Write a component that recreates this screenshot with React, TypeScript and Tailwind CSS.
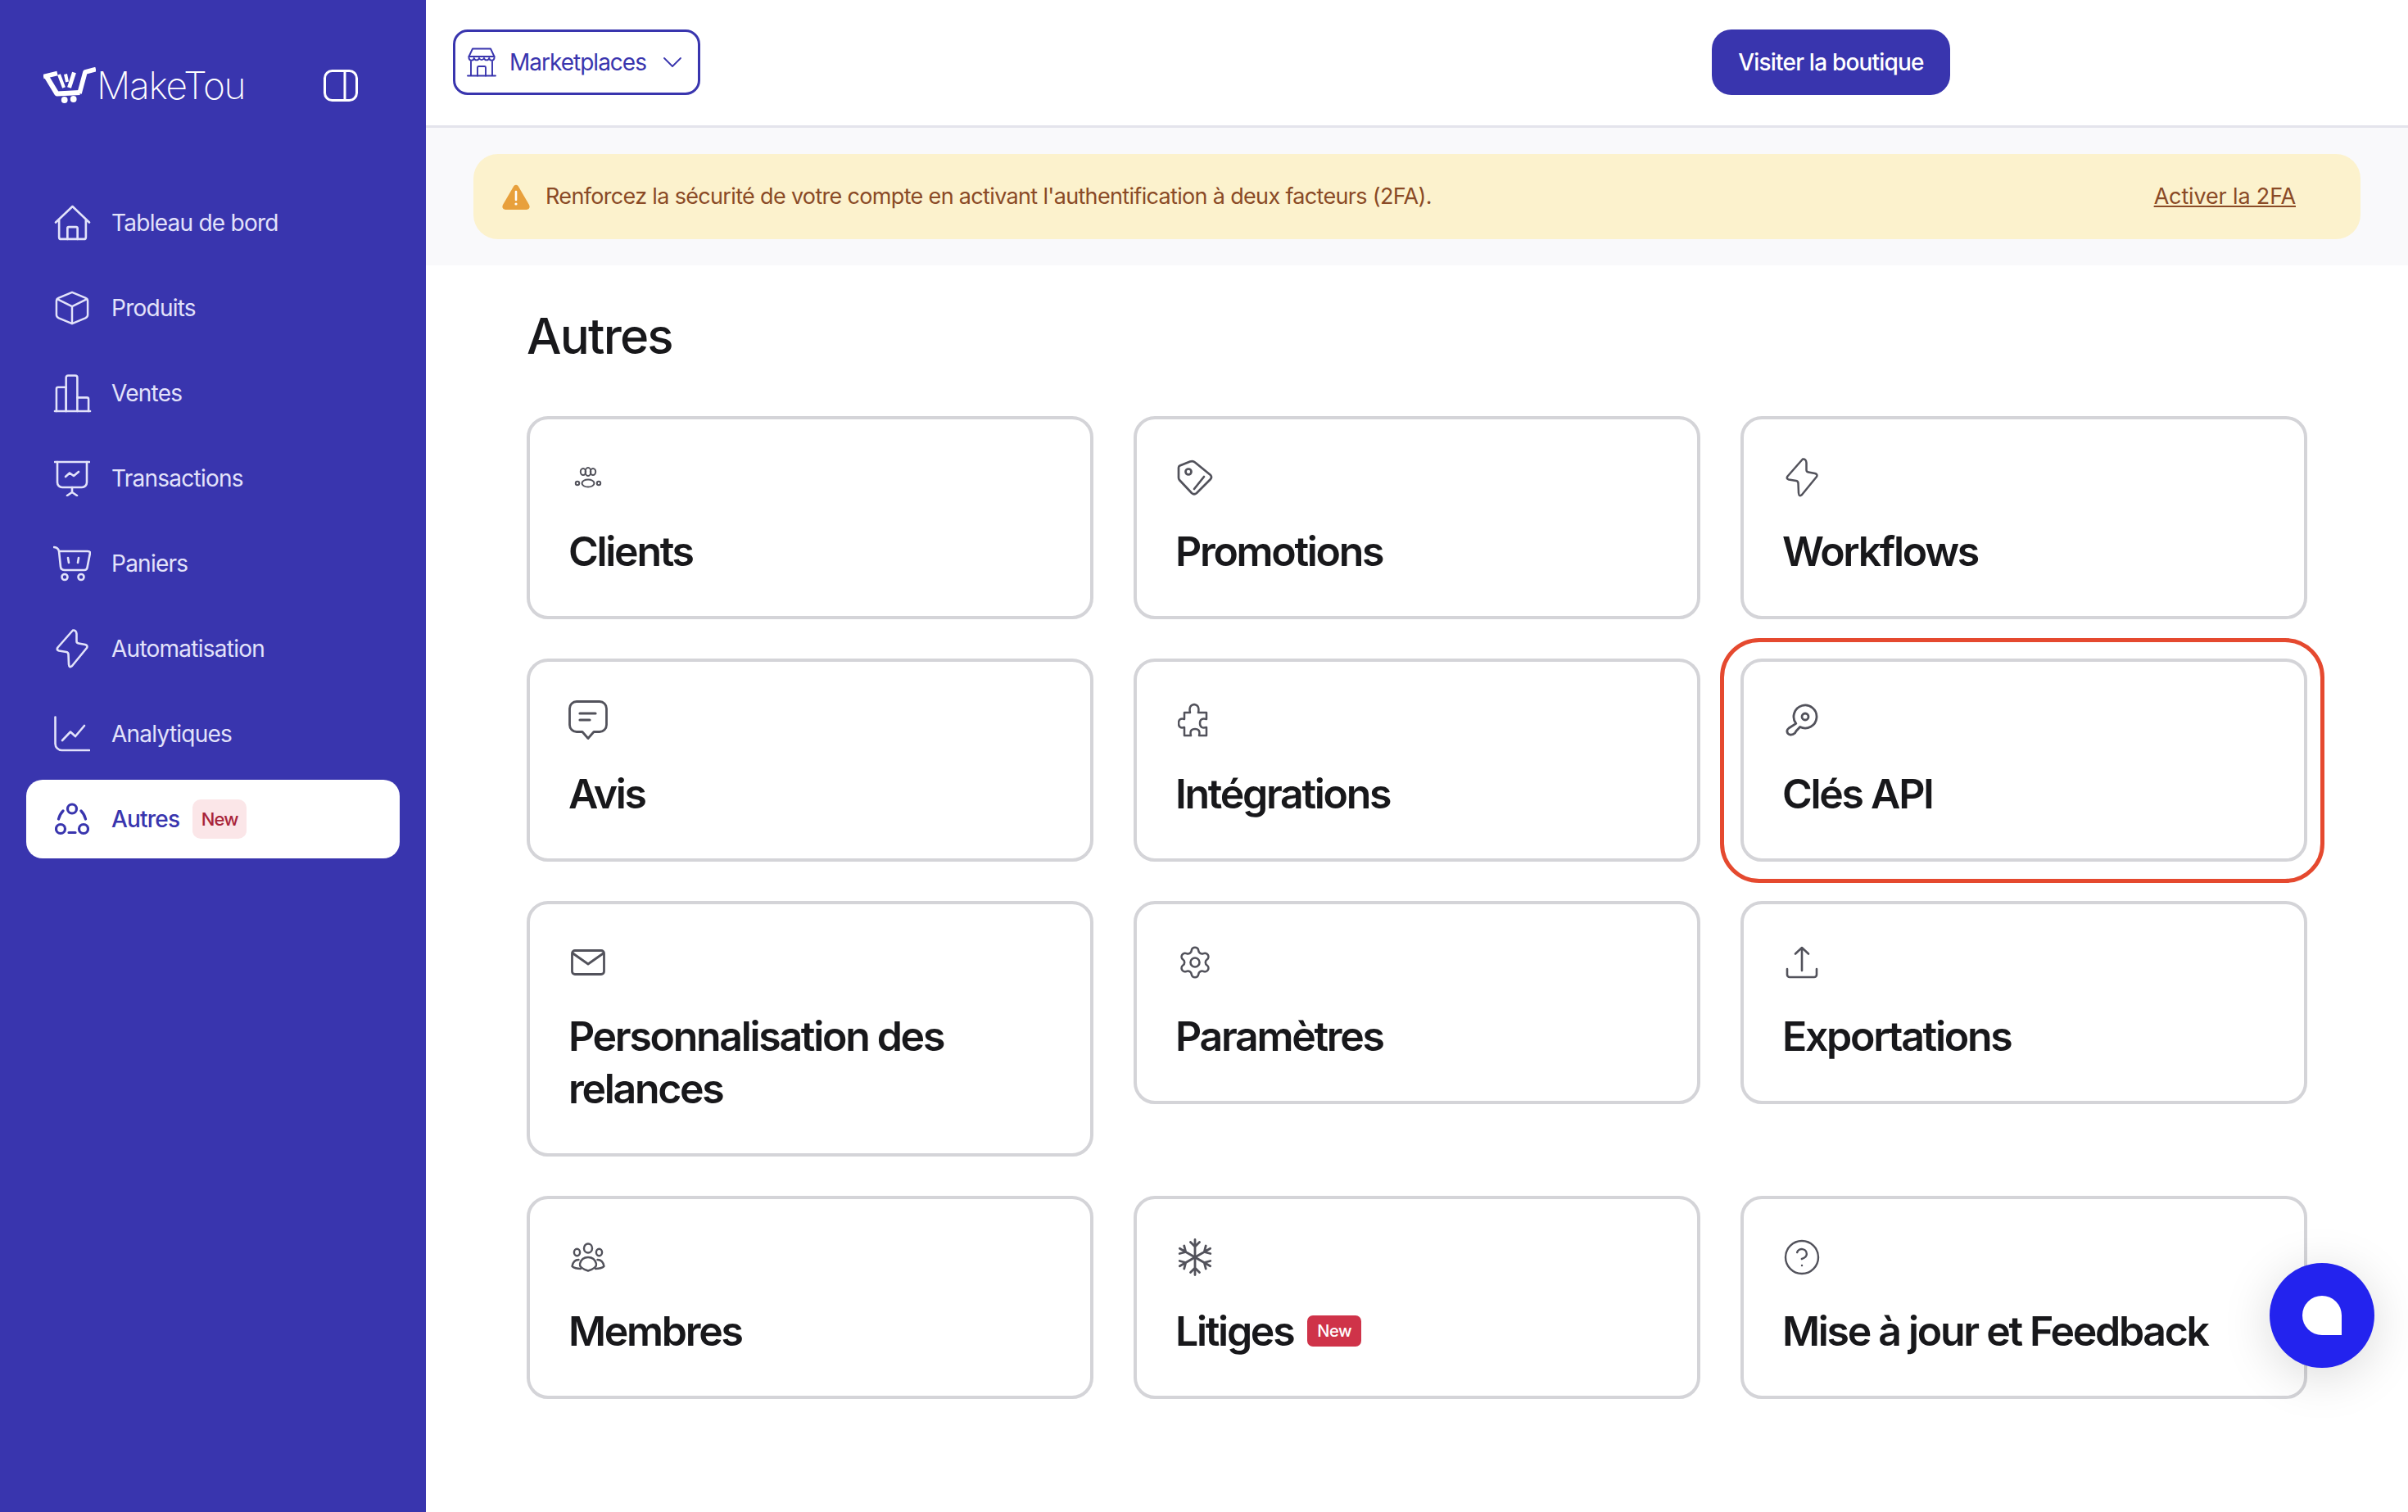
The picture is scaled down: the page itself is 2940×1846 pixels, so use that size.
import { ChevronDown, CircleHelp, Settings } from "lucide-react"
import type { ReactNode } from "react"

type IconProps = { className?: string }

function Svg({ className, box, sw = 2, children }: IconProps & { box: string; sw?: number; children: ReactNode }) {
  return (
    <svg viewBox={box} className={`shrink-0 ${className}`} fill="none" stroke="currentColor" strokeWidth={sw} strokeLinecap="round" strokeLinejoin="round">
      {children}
    </svg>
  )
}

function LogoCart({ className }: IconProps) {
  return (
    <svg viewBox="0 0 64 45" className={className} fill="none" stroke="white" strokeLinejoin="round" strokeLinecap="butt">
      <path d="M0 11.5 L17 7.5" strokeWidth="5.5" />
      <path d="M3.5 11 L16.5 32.5 L44.5 31" strokeWidth="6.2" />
      <path d="M44 32 L51 6 L64 2.5" strokeWidth="5.6" />
      <path d="M19 9 L25 25 M27 8.5 L29 18" strokeWidth="4" />
      <path d="M37.5 6.5 L31.5 25" strokeWidth="5" />
      <circle cx="25.7" cy="40" r="3.9" fill="white" stroke="none" />
      <circle cx="36.7" cy="39" r="3.9" fill="white" stroke="none" />
    </svg>
  )
}

function PanelIcon({ className }: IconProps) {
  return (
    <Svg className={className} box="0 0 42 39" sw={3}>
      <rect x="1.5" y="1.5" width="39" height="36" rx="9" />
      <path d="M26 1.5 V37.5" />
    </Svg>
  )
}

function HomeIcon({ className }: IconProps) {
  return (
    <Svg className={className} box="0 0 44 44" sw={2.6}>
      <path d="M2 21 L22 2 L42 21 M6 18 V38.5 A2.5 2.5 0 0 0 8.5 41 H35.5 A2.5 2.5 0 0 0 38 38.5 V18" />
      <path d="M16 41 V28 A1.5 1.5 0 0 1 17.5 26.5 H26.5 A1.5 1.5 0 0 1 28 28 V41" />
    </Svg>
  )
}

function BoxIcon({ className }: IconProps) {
  return (
    <Svg className={className} box="0 0 44 44" sw={2.6}>
      <path d="M22 2 L39 9 Q42 10.5 42 13 V31 Q42 33.5 39 35 L22 42 L5 35 Q2 33.5 2 31 V13 Q2 10.5 5 9 Z" />
      <path d="M3 10.5 L22 20 L41 10.5 M22 20 V42" />
    </Svg>
  )
}

function BarsIcon({ className }: IconProps) {
  return (
    <Svg className={className} box="0 0 48 48" sw={2.6}>
      <path d="M2 46 H46" />
      <path d="M4 46 V18 A2 2 0 0 1 6 16 H16 V46" />
      <path d="M16 46 V4 A2.5 2.5 0 0 1 18.5 1.5 H27.5 A2.5 2.5 0 0 1 30 4 V46" />
      <path d="M30 29 H42 A2 2 0 0 1 44 31 V46" />
    </Svg>
  )
}

function BoardIcon({ className }: IconProps) {
  return (
    <Svg className={className} box="0 0 44 44" sw={2.6}>
      <path d="M1 2 H43" />
      <path d="M4 2 V27 A6 6 0 0 0 10 33 H34 A6 6 0 0 0 40 27 V2" />
      <path d="M22 33 V39 M16 43 L22 39 L28 43" />
      <path d="M14 20 L19 15.5 L24 19 L30 14" />
    </Svg>
  )
}

function CartIcon({ className }: IconProps) {
  return (
    <Svg className={className} box="0 0 46 44" sw={2.6}>
      <path d="M1 2 Q6 2.5 7 7 L9 26 Q9.5 30 14 30 H38 Q41 30 41.5 27 L45 9 Q45 7 42 7 H7" />
      <path d="M18 15 L19 21 M31 15 L30 21" />
      <circle cx="14" cy="38.5" r="3.5" />
      <circle cx="34" cy="38.5" r="3.5" />
    </Svg>
  )
}

function BoltIcon({ className, sw = 2.6 }: IconProps & { sw?: number }) {
  return (
    <Svg className={className} box="0 0 40 48" sw={sw}>
      <path d="M21 1.5 Q25 1 25.5 6 L25.5 15 Q25.5 17 28 17.5 L36 19 Q39.5 20 38 23 L20 45 Q16.5 48 16 43 L15.5 31 Q15.5 28.5 13 28 L4 26.5 Q0.5 25.5 2.5 22.5 Z" />
    </Svg>
  )
}

function TrendIcon({ className }: IconProps) {
  return (
    <Svg className={className} box="0 0 44 44" sw={2.6}>
      <path d="M1.5 1.5 V34 A8 8 0 0 0 9.5 42 H43" />
      <path d="M10 30 L20 19.5 L26 25 L37 12" />
    </Svg>
  )
}

function OrbitIcon({ className }: IconProps) {
  return (
    <Svg className={className} box="0 0 42 40" sw={3.2}>
      <circle cx="21" cy="7.5" r="5.5" />
      <circle cx="7" cy="32" r="5.5" />
      <circle cx="35" cy="32" r="5.5" />
      <path d="M4.5 20 Q6 14 10 10 M32 10 Q36 14 37.5 20 M17 36.5 H25" />
    </Svg>
  )
}

function StoreIcon({ className }: IconProps) {
  return (
    <Svg className={className} box="0 0 36 36" sw={1.9}>
      <path d="M7 1.5 H29 L33.5 11 V13 A3.2 3.2 0 0 1 27.2 13 A3.2 3.2 0 0 1 21 13 A3.2 3.2 0 0 1 15 13 A3.2 3.2 0 0 1 8.8 13 A3.2 3.2 0 0 1 2.5 13 V11 Z" />
      <path d="M2.5 11 H33.5" />
      <path d="M5 17 V34.5 M31 17 V34.5 M1 34.5 H35" />
      <path d="M13 34.5 V24.5 A1.5 1.5 0 0 1 14.5 23 H21.5 A1.5 1.5 0 0 1 23 24.5 V34.5" />
    </Svg>
  )
}

function WarnIcon({ className }: IconProps) {
  return (
    <svg viewBox="0 0 34 31" className={className}>
      <path d="M14.4 2 Q17 -0.6 19.6 2 L33 25 Q35 30 30 31 H4 Q-1 30 1 25 Z" fill="#e8a03c" />
      <path d="M17 9 V19" stroke="white" strokeWidth="2.6" strokeLinecap="round" />
      <circle cx="17" cy="24" r="1.6" fill="white" />
    </svg>
  )
}

function PeopleDotsIcon({ className }: IconProps) {
  return (
    <Svg className={className} box="0 0 34 26" sw={2}>
      <ellipse cx="11" cy="6" rx="3.2" ry="4" />
      <ellipse cx="23" cy="6" rx="3.2" ry="4" />
      <ellipse cx="17" cy="6" rx="3.4" ry="5" />
      <ellipse cx="17" cy="20" rx="7.5" ry="4.6" />
      <circle cx="4" cy="20" r="2.2" />
      <circle cx="30" cy="20" r="2.2" />
    </Svg>
  )
}

function TagIcon({ className }: IconProps) {
  return (
    <Svg className={className} box="0 0 44 44" sw={2.7}>
      <path d="M3.5 7.5 L16 2.5 Q19.5 1.2 22 3.5 L41 19 Q43 21.5 41 24 L24 41 Q21 43.5 18 41 L3 25 Q2 24 2 22 V10 Q2 8.2 3.5 7.5 Z" />
      <circle cx="14" cy="15" r="3.5" />
      <path d="M21 36 L33 21" />
    </Svg>
  )
}

function BubbleIcon({ className }: IconProps) {
  return (
    <Svg className={className} box="0 0 48 48" sw={2.8}>
      <path d="M10 1.5 H38 A8.5 8.5 0 0 1 46.5 10 V30 A8.5 8.5 0 0 1 38 38.5 H31 L24 46.5 L17 38.5 H10 A8.5 8.5 0 0 1 1.5 30 V10 A8.5 8.5 0 0 1 10 1.5 Z" />
      <path d="M14 16 H33 M14 24 H26" strokeWidth="3.2" />
    </Svg>
  )
}

function PuzzleIcon({ className }: IconProps) {
  return (
    <Svg className={className} box="0 0 42 42" sw={2.5}>
      <path d="M8 12 H15 Q13 3 20 2 Q27 3 25 12 H35 V20 Q27 18 27 25 Q27 32 35 30 V40 H26 Q28 32 21 32 Q14 32 16 40 H8 V30 Q1 32 1 25 Q1 18 8 20 Z" />
    </Svg>
  )
}

function KeyIcon({ className }: IconProps) {
  return (
    <Svg className={className} box="0 0 40 40" sw={2.8}>
      <path d="M12.8 24.4 A14 14 0 1 1 17.7 28.5 L13 33.5 L11.5 36 Q9 38.5 5.5 38 Q2 37 1.8 33.5 Q2 31.5 4 30 Z" />
      <circle cx="24" cy="16" r="4" />
    </Svg>
  )
}

function MailIcon({ className }: IconProps) {
  return (
    <Svg className={className} box="0 0 42 32" sw={2.8}>
      <rect x="1.5" y="1.5" width="39" height="29" rx="3.5" />
      <path d="M2.5 5 L21 18 L39.5 5" />
    </Svg>
  )
}

function UploadIcon({ className }: IconProps) {
  return (
    <Svg className={className} box="0 0 40 40" sw={2.6}>
      <path d="M20 30 V2 M12 9.5 L20 2 L28 9.5" />
      <path d="M2 28 V35 A3 3 0 0 0 5 38 H35 A3 3 0 0 0 38 35 V28" />
    </Svg>
  )
}

function TeamIcon({ className }: IconProps) {
  return (
    <Svg className={className} box="0 0 42 36" sw={2.4}>
      <ellipse cx="21" cy="7" rx="5" ry="5.5" />
      <ellipse cx="7.5" cy="12" rx="3.6" ry="4.2" />
      <ellipse cx="34.5" cy="12" rx="3.6" ry="4.2" />
      <path d="M21 18 Q13 18 11 26 Q10 31 21 34.5 Q32 31 31 26 Q29 18 21 18 Z" />
      <path d="M9.5 21 Q3 21 1.5 29 Q5 32 12 32 M32.5 21 Q39 21 40.5 29 Q37 32 30 32" />
    </Svg>
  )
}

function FlakeIcon({ className }: IconProps) {
  return (
    <Svg className={className} box="0 0 46 46" sw={2.8}>
      {[0, 60, 120, 180, 240, 300].map((deg) => (
        <path key={deg} transform={`rotate(${deg} 23 23)`} d="M23 23 V1.5 M17.5 4.5 L23 10 L28.5 4.5" />
      ))}
    </Svg>
  )
}

const navItems = [
  { label: "Tableau de bord", icon: <HomeIcon className="w-[45px] h-[45px]" /> },
  { label: "Produits", icon: <BoxIcon className="w-[42px] h-[42px]" /> },
  { label: "Ventes", icon: <BarsIcon className="w-[47px] h-[47px]" /> },
  { label: "Transactions", icon: <BoardIcon className="w-[44px] h-[44px]" /> },
  { label: "Paniers", icon: <CartIcon className="w-[46px] h-[44px]" /> },
  { label: "Automatisation", icon: <BoltIcon className="w-[40px] h-[48px]" /> },
  { label: "Analytiques", icon: <TrendIcon className="w-[44px] h-[44px]" /> },
]

function NavRow({ label, icon }: { label: string; icon: ReactNode }) {
  return (
    <div className="flex h-[96px] items-center rounded-[20px] pl-[34px] text-[#e2e2fa]">
      <div className="flex w-[44px] shrink-0 items-center justify-center">{icon}</div>
      <span className="ml-[26px] text-[28px] tracking-[-0.75px]">{label}</span>
    </div>
  )
}

type CardData = { label: string; icon: ReactNode; badge?: boolean; marked?: boolean }

const cards: CardData[] = [
  { label: "Clients", icon: <PeopleDotsIcon className="w-[34px] h-[26px]" /> },
  { label: "Promotions", icon: <TagIcon className="w-[44px] h-[44px]" /> },
  { label: "Workflows", icon: <BoltIcon className="w-[40px] h-[48px]" sw={2.5} /> },
  { label: "Avis", icon: <BubbleIcon className="w-[48px] h-[48px]" /> },
  { label: "Intégrations", icon: <PuzzleIcon className="w-[42px] h-[42px]" /> },
  { label: "Clés API", icon: <KeyIcon className="w-[40px] h-[40px]" />, marked: true },
  { label: "Personnalisation des relances", icon: <MailIcon className="w-[42px] h-[32px]" /> },
  { label: "Paramètres", icon: <Settings className="w-[44px] h-[44px]" strokeWidth={1.4} /> },
  { label: "Exportations", icon: <UploadIcon className="w-[40px] h-[40px]" /> },
  { label: "Membres", icon: <TeamIcon className="w-[42px] h-[36px]" /> },
  { label: "Litiges", icon: <FlakeIcon className="w-[46px] h-[46px]" />, badge: true },
  { label: "Mise à jour et Feedback", icon: <CircleHelp className="w-[48px] h-[48px]" strokeWidth={1.2} /> },
]

function Card({ label, icon, badge, marked }: CardData) {
  return (
    <div className="relative rounded-[26px] border-[4px] border-[#d4d4d8] bg-white p-[47px]">
      {marked && (
        <div className="absolute -left-[29px] -right-[25px] -top-[29px] -bottom-[30px] rounded-[48px] border-[5px] border-[#e5492f]" />
      )}
      <div className="flex h-[48px] w-[48px] items-center justify-center text-[#52525b]">{icon}</div>
      <div className="mt-[34px] flex items-center gap-[17px]">
        <span className="text-[50px] font-semibold leading-[64px] tracking-[-2.3px] text-[#18181b]">{label}</span>
        {badge && (
          <span className="rounded-[7px] bg-[#cf3349] px-[12px] py-[6px] text-[20px] font-medium leading-[26px] tracking-[-0.4px] text-white">
            New
          </span>
        )}
      </div>
    </div>
  )
}

export default function App() {
  return (
    <div className="relative flex h-screen w-full overflow-hidden bg-white font-['Inter',sans-serif]">
      <aside className="w-[520px] shrink-0 bg-[#3935ae]">
        <div className="mt-[64px] flex h-[80px] items-center justify-between pl-[53px] pr-[83px]">
          <div className="flex items-center gap-[1px]">
            <LogoCart className="w-[64px] h-[45px]" />
            <span className="text-[46px] font-extralight leading-none tracking-[-1.3px] text-white">MakeTou</span>
          </div>
          <PanelIcon className="w-[42px] h-[39px] text-white" />
        </div>
        <nav className="mt-[80px] flex flex-col gap-[8px] px-[32px]">
          {navItems.map((item) => (
            <NavRow key={item.label} label={item.label} icon={item.icon} />
          ))}
          <div className="flex h-[96px] items-center rounded-[20px] bg-white pl-[34px] text-[#3935ae]">
            <div className="flex w-[44px] shrink-0 items-center justify-center">
              <OrbitIcon className="w-[42px] h-[40px]" />
            </div>
            <span className="ml-[26px] text-[28px] font-medium tracking-[-0.8px]">Autres</span>
            <span className="ml-[16px] flex h-[48px] w-[66px] items-center justify-center rounded-[10px] bg-[#fbe6e8] text-[22px] font-medium tracking-[-0.8px] text-[#a8243a]">
              New
            </span>
          </div>
        </nav>
      </aside>

      <main className="flex min-w-0 flex-1 flex-col">
        <header className="flex h-[156px] shrink-0 items-center justify-between border-b-[3px] border-[#e4e4ec] pl-[33px] pr-[559px] pb-[1px]">
          <button className="flex h-[80px] w-[302px] items-center rounded-[18px] border-[3px] border-[#3935ae] pl-[14px] text-[#3935ae]">
            <StoreIcon className="w-[36px] h-[36px]" />
            <span className="ml-[16px] text-[28px] tracking-[-1px]">Marketplaces</span>
            <ChevronDown className="ml-[12px] w-[40px] h-[40px]" strokeWidth={1.1} />
          </button>
          <button className="flex h-[80px] w-[291px] items-center justify-center rounded-[24px] bg-[#3935ae] text-[28px] font-medium tracking-[-0.8px] text-white">
            Visiter la boutique
          </button>
        </header>

        <div className="shrink-0 bg-[#f9f9fb] px-[58px] py-[32px]">
          <div className="flex h-[104px] items-center justify-between rounded-[30px] bg-[#fcf2cd] pl-[35px] pr-[79px] text-[27px] text-[#8a4a26]">
            <div className="flex items-center gap-[19px]">
              <WarnIcon className="w-[34px] h-[31px]" />
              <span className="tracking-[-0.67px]">Renforcez la sécurité de votre compte en activant l'authentification à deux facteurs (2FA).</span>
            </div>
            <a className="underline tracking-[-0.15px]">Activer la 2FA</a>
          </div>
        </div>

        <section className="pl-[123px] pt-[50px]">
          <h1 className="text-[60px] font-medium leading-[72px] tracking-[-1.8px] text-[#18181b]">Autres</h1>
          <div className="mt-[62px] grid w-[2174px] grid-cols-3 items-start gap-x-[49px] gap-y-[48px]">
            {cards.map((card) => (
              <Card key={card.label} {...card} />
            ))}
          </div>
        </section>
      </main>

      <div className="absolute bottom-[176px] right-[41px] flex h-[128px] w-[128px] items-center justify-center rounded-full bg-[#2323ee] shadow-[0_10px_60px_rgba(0,0,0,0.15)]">
        <svg viewBox="0 0 48 48" className="w-[48px] h-[48px]">
          <path d="M24 0 A24 24 0 0 1 48 24 V48 H24 A24 24 0 0 1 24 0 Z" fill="white" />
        </svg>
      </div>
    </div>
  )
}
